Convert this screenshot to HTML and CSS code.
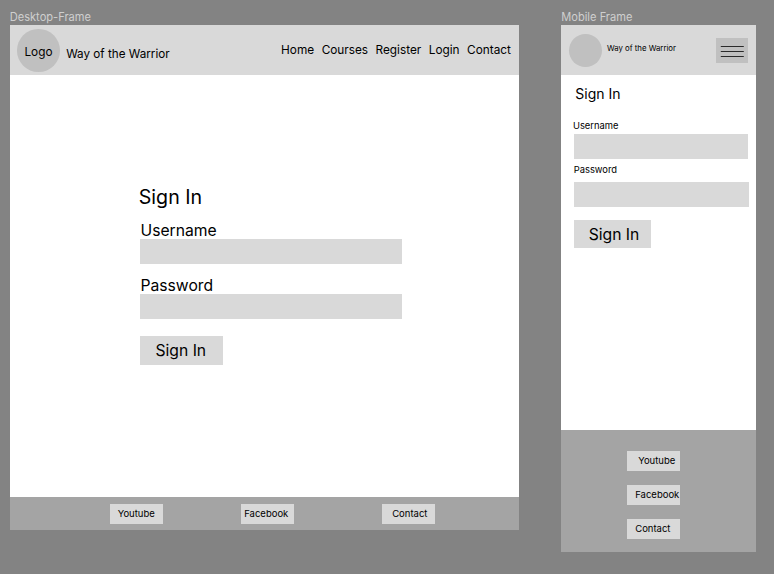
FILE: index.html
```html
<!DOCTYPE html>
<html lang="en">
<head>
<meta charset="utf-8">
<title>Sign In Wireframes</title>
<link rel="stylesheet" href="styles.css">
</head>
<body>
<section class="artboard desktop">
  <div class="frame-label">Desktop-Frame</div>
  <header class="header">
    <div class="logo">Logo</div>
    <div class="brand">Way of the Warrior</div>
    <nav class="nav"><a>Home</a><a>Courses</a><a>Register</a><a>Login</a><a>Contact</a></nav>
  </header>
  <main class="main">
    <h1 class="title">Sign In</h1>
    <div class="label">Username</div>
    <div class="input"></div>
    <div class="label second">Password</div>
    <div class="input"></div>
    <div class="button">Sign In</div>
  </main>
  <footer class="footer">
    <div class="link youtube">Youtube</div>
    <div class="link facebook">Facebook</div>
    <div class="link contact">Contact</div>
  </footer>
</section>
<section class="artboard mobile">
  <div class="frame-label">Mobile Frame</div>
  <header class="header">
    <div class="logo"></div>
    <div class="brand">Way of the Warrior</div>
    <div class="menu"><svg width="24" height="12" viewBox="0 0 24 12"><path d="M.8 1.5H23.8M.8 6.5H23.8M.8 11.5H23.8" stroke="#2a2a2a" stroke-width="1"/></svg></div>
  </header>
  <main class="main">
    <h1 class="title">Sign In</h1>
    <div class="label">Username</div>
    <div class="input"></div>
    <div class="label second">Password</div>
    <div class="input wide"></div>
    <div class="button">Sign In</div>
  </main>
  <footer class="footer">
    <div class="link youtube">Youtube</div>
    <div class="link facebook">Facebook</div>
    <div class="link contact">Contact</div>
  </footer>
</section>
</body>
</html>
```
FILE: styles.css
```css
* { box-sizing: border-box; }
body {
  margin: 0;
  height: 574px;
  padding: 9px 18px 0 9.7px;
  display: flex;
  justify-content: space-between;
  align-items: flex-start;
  overflow: hidden;
  background: #838383;
  color: #000;
  font-family: Inter, "Liberation Sans", sans-serif;
  white-space: nowrap;
}
.frame-label { height: 16px; line-height: 17px; font-size: 11.1px; color: #cfcfcf; }
.header { height: 50.3px; display: flex; align-items: flex-start; background: #d9d9d9; }
.logo { border-radius: 50%; background: #c0c0c0; flex: none; }
.main { background: #fff; overflow: hidden; }
.title { margin: 0; font-weight: 400; }
.input { background: #d9d9d9; height: 24.6px; }
.button { background: #d9d9d9; height: 28.5px; line-height: 30px; font-size: 15.7px; padding-left: 15px; }
.footer { background: #a4a4a4; display: flex; }
.link { width: 53px; height: 20px; line-height: 19px; font-size: 9.5px; background: #d9d9d9; }

.desktop { width: 509.8px; }
.desktop .logo { width: 42.6px; height: 42.6px; margin: 4px 0 0 7.5px; line-height: 46px; font-size: 11.8px; text-align: center; }
.desktop .brand { margin: 18px 0 0 6.4px; line-height: 22px; font-size: 11.7px; }
.desktop .nav { margin: 15px 8.6px 0 auto; display: flex; gap: 7.5px; line-height: 20px; font-size: 11.8px; }
.desktop .main { height: 421.7px; padding: 109px 0 0 130.8px; }
.desktop .title { height: 34px; line-height: 26px; font-size: 19.6px; margin-left: -1.7px; }
.desktop .label { height: 21px; line-height: 25px; font-size: 15.7px; }
.desktop .second { margin-top: 9.5px; height: 21px; }
.desktop .input { width: 261.5px; }
.desktop .button { width: 82.4px; margin-top: 17.4px; }
.desktop .footer { height: 33px; padding: 7px 84.3px 0 100px; justify-content: space-between; }
.desktop .youtube { padding-left: 8px; }
.desktop .facebook { padding-left: 3px; margin-left: -9.4px; }
.desktop .contact { padding-left: 10px; }

.mobile { width: 194.8px; }
.mobile .logo { width: 33.3px; height: 33.3px; margin: 8.5px 0 0 7.8px; }
.mobile .brand { margin: 13px 0 0 4.6px; line-height: 20px; font-size: 7.8px; }
.mobile .menu { width: 32.3px; height: 25.3px; margin: 13.2px 8px 0 auto; background: #c0c0c0; display: flex; justify-content: center; align-items: center; }
.mobile .main { height: 354.7px; padding: 8.5px 0 0 12.5px; }
.mobile .title { height: 32px; line-height: 20px; font-size: 14px; margin-left: 1.6px; }
.mobile .label { height: 18.3px; line-height: 20px; font-size: 9.4px; margin-left: -.8px; }
.mobile .second { height: 23.4px; line-height: 22px; margin-left: 0; }
.mobile .input { width: 174.3px; }
.mobile .wide { width: 175.2px; }
.mobile .button { width: 77.2px; margin-top: 12.9px; }
.mobile .footer { height: 122px; padding: 21px 0 0 66px; flex-direction: column; gap: 14px; }
.mobile .youtube { padding-left: 11px; }
.mobile .facebook { padding-left: 8px; }
.mobile .contact { padding-left: 8px; }
```
